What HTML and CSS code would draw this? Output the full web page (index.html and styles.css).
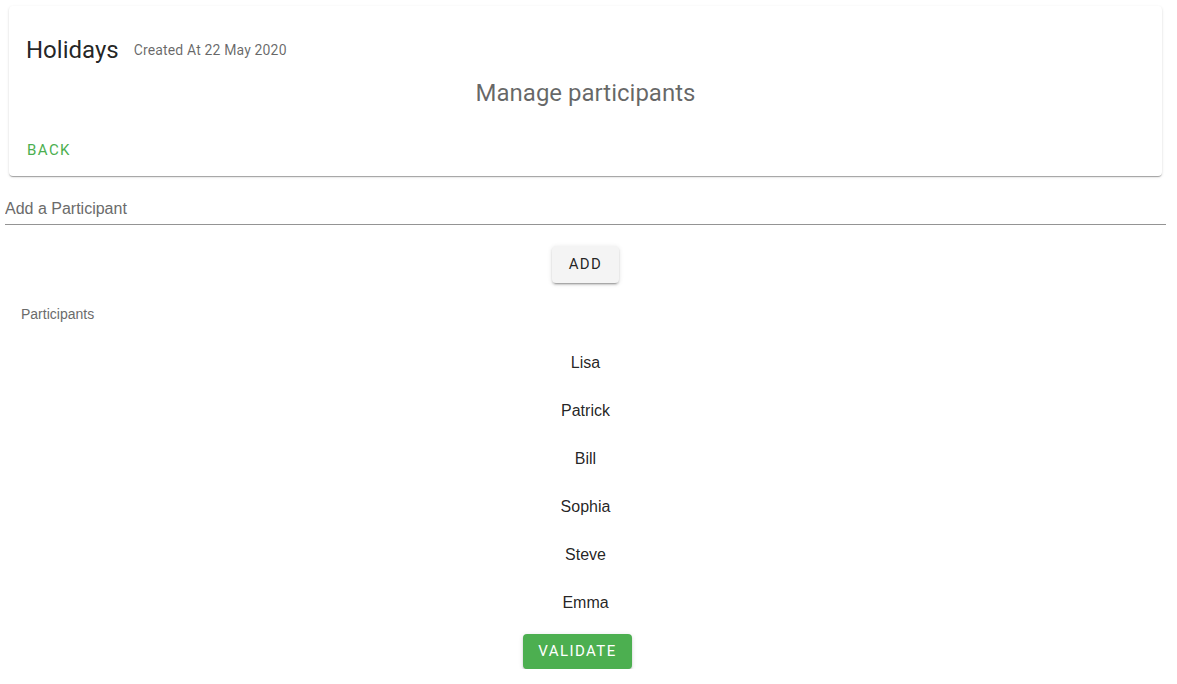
FILE: index.html
```html
<!DOCTYPE html>
<html lang="en">
<head>
<meta charset="utf-8">
<title>Manage participants</title>
<link rel="stylesheet" href="styles.css">
</head>
<body>
<div class="page">
  <div class="card">
    <div class="card-header">
      <h1 class="title">Holidays</h1>
      <span class="subtitle">Created At 22 May 2020</span>
    </div>
    <h2 class="card-heading">Manage participants</h2>
    <div class="card-actions">
      <button class="btn btn-text">Back</button>
    </div>
  </div>

  <div class="field">
    <input class="field-input" type="text" placeholder="Add a Participant">
  </div>

  <div class="add-row">
    <button class="btn btn-default">Add</button>
  </div>

  <div class="section-label">Participants</div>

  <ul class="names">
    <li class="name">Lisa</li>
    <li class="name">Patrick</li>
    <li class="name">Bill</li>
    <li class="name">Sophia</li>
    <li class="name">Steve</li>
    <li class="name">Emma</li>
  </ul>

  <div class="validate-row">
    <button class="btn btn-primary">Validate</button>
  </div>
</div>
</body>
</html>
```

FILE: styles.css
```css
* { box-sizing: border-box; }

html, body {
  margin: 0;
  padding: 0;
  background: #ffffff;
}

body {
  font-family: "Liberation Sans", Arial, sans-serif;
  color: rgba(0, 0, 0, 0.87);
}

.page {
  width: 1161px;
  margin-left: 5px;
  padding-top: 6px;
}

.card {
  margin: 0 4px;
  background: #fff;
  border-radius: 4px;
  box-shadow: 0px 2px 1px -1px rgba(0,0,0,0.2), 0px 1px 1px 0px rgba(0,0,0,0.14), 0px 1px 3px 0px rgba(0,0,0,0.12);
  font-family: Roboto, "Liberation Sans", sans-serif;
}

.card-header {
  display: flex;
  align-items: center;
  padding: 27.5px 17px 0 17px;
}

.title {
  margin: 0;
  font-family: Roboto, sans-serif;
  font-weight: 400;
  font-size: 24px;
  line-height: 32px;
  color: rgba(0, 0, 0, 0.87);
}

.subtitle {
  margin-left: 15px;
  font-size: 14px;
  line-height: 20px;
  letter-spacing: 0.01071em;
  color: rgba(0, 0, 0, 0.6);
}

.card-heading {
  margin: 11px 0 0 0;
  text-align: center;
  font-weight: 400;
  font-size: 24px;
  line-height: 32px;
  color: rgba(0, 0, 0, 0.6);
}

.card-actions {
  display: flex;
  padding: 23px 8px 8px 8px;
}

.btn {
  font-family: Roboto, sans-serif;
  font-size: 15px;
  font-weight: 400;
  line-height: 24.5px;
  letter-spacing: 0.095em;
  text-transform: uppercase;
  border: 0;
  border-radius: 4px;
  cursor: pointer;
  min-width: 64px;
  text-align: center;
}

.btn-text {
  background: transparent;
  color: #4caf50;
  padding: 6px 8px;
}

.btn-default {
  background: #f4f4f4;
  color: rgba(0, 0, 0, 0.87);
  padding: 6px 17px;
  box-shadow: 0px 3px 1px -2px rgba(0,0,0,0.2), 0px 2px 2px 0px rgba(0,0,0,0.14), 0px 1px 5px 0px rgba(0,0,0,0.12);
}

.btn-primary {
  background: #4caf50;
  color: #fff;
  padding: 5.5px 15.5px;
  box-shadow: 0px 3px 1px -2px rgba(0,0,0,0.2), 0px 2px 2px 0px rgba(0,0,0,0.14), 0px 1px 5px 0px rgba(0,0,0,0.12);
}

.field {
  margin-top: 18px;
}

.field-input {
  display: block;
  width: 100%;
  height: 31px;
  padding: 6px 0 6px 0;
  border: 0;
  border-bottom: 1px solid #949494;
  outline: none;
  background: transparent;
  font-family: "Liberation Sans", Arial, sans-serif;
  font-size: 16px;
  line-height: 18px;
  color: rgba(0, 0, 0, 0.87);
}

.field-input::placeholder {
  color: #6b6b6b;
  opacity: 1;
}

.add-row {
  display: flex;
  justify-content: center;
  margin-top: 21px;
}

.section-label {
  margin-top: 21px;
  padding-left: 16px;
  font-size: 14px;
  line-height: 20px;
  color: #6b6b6b;
}

.names {
  list-style: none;
  margin: 15px 0 0 0;
  padding: 0;
}

.name {
  padding: 12px 0;
  font-size: 16px;
  line-height: 24px;
  text-align: center;
  color: rgba(0, 0, 0, 0.87);
}

.validate-row {
  display: flex;
  justify-content: center;
  padding-right: 16px;
  margin-top: 7px;
}
```
